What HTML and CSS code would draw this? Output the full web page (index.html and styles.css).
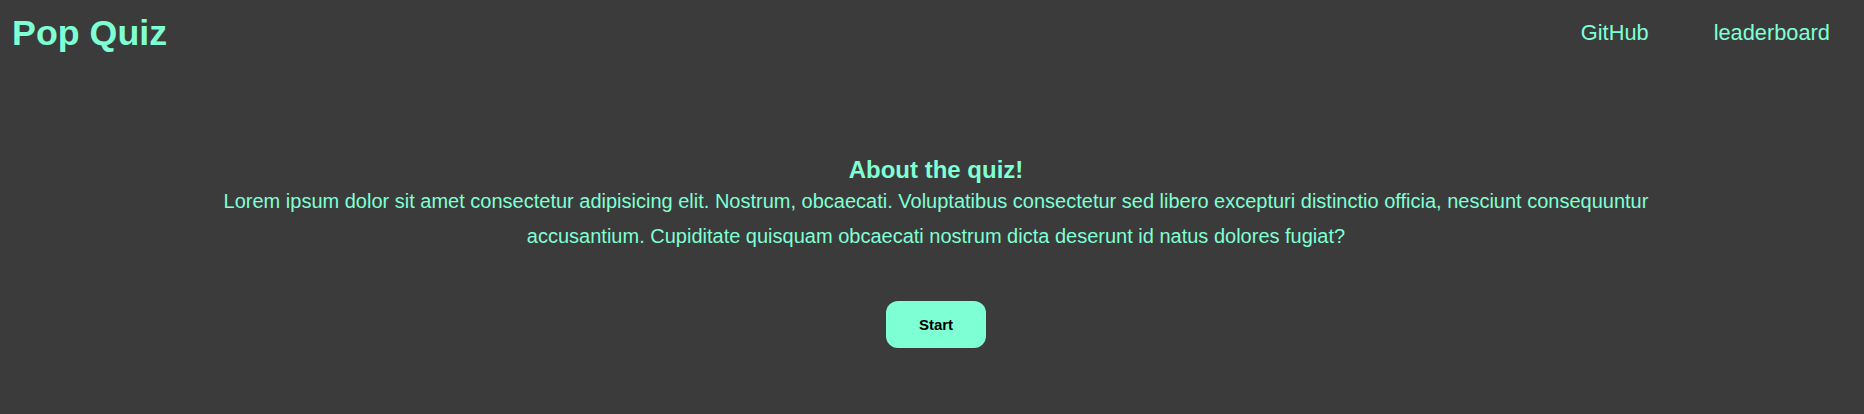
FILE: index.html
```html
<!DOCTYPE html>
<html lang="en">
<head>
<meta charset="utf-8">
<title>Pop Quiz</title>
<link rel="stylesheet" href="styles.css">
</head>
<body>
<header class="topbar">
  <h1 class="brand">Pop Quiz</h1>
  <nav class="nav">
    <a class="nav-link" href="#">GitHub</a>
    <a class="nav-link" href="#">leaderboard</a>
  </nav>
</header>
<main class="intro">
  <h2 class="intro-title">About the quiz!</h2>
  <p class="intro-text">Lorem ipsum dolor sit amet consectetur adipisicing elit. Nostrum, obcaecati. Voluptatibus consectetur sed libero excepturi distinctio officia, nesciunt consequuntur accusantium. Cupiditate quisquam obcaecati nostrum dicta deserunt id natus dolores fugiat?</p>
  <button class="start-btn" type="button">Start</button>
</main>
</body>
</html>
```
FILE: styles.css
```css
html, body {
  margin: 0;
  padding: 0;
}
body {
  background: #3b3b3b;
  color: #7fffd4;
  font-family: "Liberation Sans", Arial, sans-serif;
  min-height: 414px;
}
.topbar {
  display: flex;
  justify-content: space-between;
  align-items: flex-start;
  padding: 0 34px 0 12px;
}
.brand {
  margin: 13px 0 0;
  font-size: 35.8px;
  font-weight: bold;
}
.nav {
  display: flex;
  gap: 65px;
  margin-top: 20px;
}
.nav-link {
  color: #7fffd4;
  text-decoration: none;
  font-size: 21.8px;
}
.intro {
  display: flex;
  flex-direction: column;
  align-items: center;
  padding-left: 8px;
  margin-top: 102px;
}
.intro-title {
  margin: 0;
  font-size: 24px;
  font-weight: bold;
}
.intro-text {
  margin: 0;
  width: 1480px;
  font-size: 20px;
  line-height: 34.5px;
  text-align: center;
}
.start-btn {
  margin-top: 48px;
  width: 100px;
  height: 47px;
  border: none;
  border-radius: 12px;
  background: #7fffd4;
  color: #000;
  font-family: "Liberation Sans", Arial, sans-serif;
  font-size: 15px;
  font-weight: bold;
  cursor: pointer;
}
```
